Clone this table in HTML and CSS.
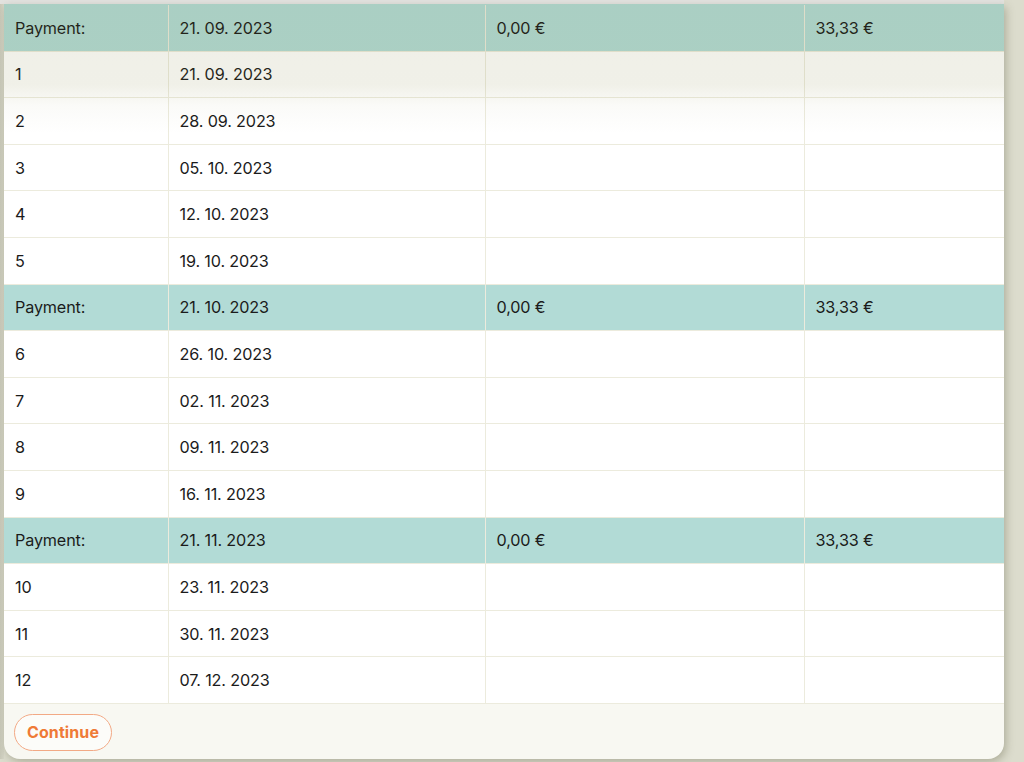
FILE: index.html
```html
<!DOCTYPE html>
<html>
<head>
<meta charset="utf-8">
<link rel="stylesheet" href="styles.css">
</head>
<body>
<div class="page">
  <div class="topbar"></div>
  <div class="card">
    <div class="scroll">
      <table class="schedule">
        <colgroup>
          <col class="c1"><col class="c2"><col class="c3"><col class="c4">
        </colgroup>
        <tbody>
          <tr class="pay"><td>Payment:</td><td>21. 09. 2023</td><td>0,00 €</td><td>33,33 €</td></tr>
          <tr><td>1</td><td>21. 09. 2023</td><td></td><td></td></tr>
          <tr><td>2</td><td>28. 09. 2023</td><td></td><td></td></tr>
          <tr><td>3</td><td>05. 10. 2023</td><td></td><td></td></tr>
          <tr><td>4</td><td>12. 10. 2023</td><td></td><td></td></tr>
          <tr><td>5</td><td>19. 10. 2023</td><td></td><td></td></tr>
          <tr class="pay"><td>Payment:</td><td>21. 10. 2023</td><td>0,00 €</td><td>33,33 €</td></tr>
          <tr><td>6</td><td>26. 10. 2023</td><td></td><td></td></tr>
          <tr><td>7</td><td>02. 11. 2023</td><td></td><td></td></tr>
          <tr><td>8</td><td>09. 11. 2023</td><td></td><td></td></tr>
          <tr><td>9</td><td>16. 11. 2023</td><td></td><td></td></tr>
          <tr class="pay"><td>Payment:</td><td>21. 11. 2023</td><td>0,00 €</td><td>33,33 €</td></tr>
          <tr><td>10</td><td>23. 11. 2023</td><td></td><td></td></tr>
          <tr><td>11</td><td>30. 11. 2023</td><td></td><td></td></tr>
          <tr><td>12</td><td>07. 12. 2023</td><td></td><td></td></tr>
        </tbody>
      </table>
      <div class="fade"></div>
    </div>
    <div class="footer">
      <button class="continue">Continue</button>
    </div>
  </div>
</div>
</body>
</html>
```

FILE: styles.css
```css
html, body {
  margin: 0;
  padding: 0;
}
body {
  background: #dcdccd;
  font-family: "Inter", "DejaVu Sans", sans-serif;
  color: #1b1b1b;
  width: 1024px;
  height: 762px;
  overflow: hidden;
}
.page {
  width: 1004px;
  background: linear-gradient(to right, #c9c9b9 0, #d6d6c7 4px, transparent 4px);
}
.topbar {
  height: 4px;
  background: #e3e3e0;
  width: 1004px;
}
.card {
  margin-left: 4px;
  width: 1000px;
  background: #f8f8f2;
  border-radius: 0 0 16px 16px;
  box-shadow: 2px 3px 8px rgba(90, 90, 60, 0.35);
  overflow: hidden;
}
.scroll {
  position: relative;
}
.schedule {
  width: 100%;
  border-collapse: collapse;
  table-layout: fixed;
  font-size: 16.2px;
  letter-spacing: -0.15px;
}
.c1 { width: 164px; }
.c2 { width: 317px; }
.c3 { width: 319px; }
.c4 { width: auto; }
.schedule td {
  height: 46.6px;
  padding: 0 11px 0;
  box-sizing: border-box;
  background: #ffffff;
  border-top: 1px solid #ecebdd;
  border-left: 1px solid #ecebdd;
  vertical-align: middle;
  white-space: nowrap;
}
.schedule td:first-child {
  border-left: none;
}
.schedule tr:first-child td {
  border-top: 1px solid #b2dbd6;
}
.schedule tr.pay td {
  background: #b2dbd6;
}
.schedule tr:last-child td {
  border-bottom: 1px solid #ecebdd;
}
.fade {
  position: absolute;
  left: 0;
  right: 0;
  top: 0;
  height: 130px;
  pointer-events: none;
  background: linear-gradient(to bottom, rgba(100, 100, 30, 0.1) 0, rgba(110, 110, 30, 0.1) 62%, rgba(110, 110, 30, 0.03) 78%, rgba(110, 110, 30, 0) 100%);
}
.footer {
  height: 55px;
  display: flex;
  align-items: center;
  padding-left: 10px;
  padding-top: 2px;
  box-sizing: border-box;
}
.continue {
  font-family: "Inter", "DejaVu Sans", sans-serif;
  font-size: 16px;
  font-weight: 700;
  color: #ef7a36;
  background: #fcfcf9;
  border: 1px solid #f2a985;
  border-radius: 19px;
  height: 37px;
  width: 98px;
  padding: 0;
  letter-spacing: 0.1px;
  cursor: pointer;
}
```
